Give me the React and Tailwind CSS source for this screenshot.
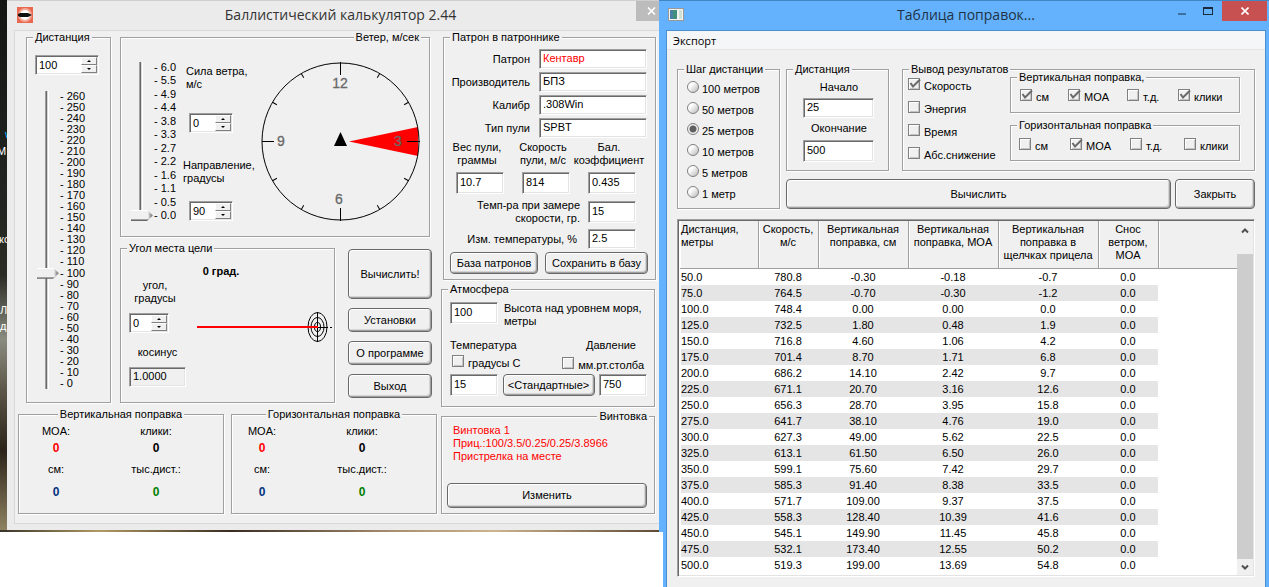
import React from 'react';
import { clsx } from 'clsx';

const distanceMarks = Array.from({ length: 27 }, (_, i) => 260 - i * 10);
const windMarks = ['6.0', '5.5', '4.9', '4.4', '3.8', '3.3', '2.7', '2.2', '1.6', '1.1', '0.5', '0.0'];

const rows = [
  ['50.0', '780.8', '-0.30', '-0.18', '-0.7', '0.0'],
  ['75.0', '764.5', '-0.70', '-0.30', '-1.2', '0.0'],
  ['100.0', '748.4', '0.00', '0.00', '0.0', '0.0'],
  ['125.0', '732.5', '1.80', '0.48', '1.9', '0.0'],
  ['150.0', '716.8', '4.60', '1.06', '4.2', '0.0'],
  ['175.0', '701.4', '8.70', '1.71', '6.8', '0.0'],
  ['200.0', '686.2', '14.10', '2.42', '9.7', '0.0'],
  ['225.0', '671.1', '20.70', '3.16', '12.6', '0.0'],
  ['250.0', '656.3', '28.70', '3.95', '15.8', '0.0'],
  ['275.0', '641.7', '38.10', '4.76', '19.0', '0.0'],
  ['300.0', '627.3', '49.00', '5.62', '22.5', '0.0'],
  ['325.0', '613.1', '61.50', '6.50', '26.0', '0.0'],
  ['350.0', '599.1', '75.60', '7.42', '29.7', '0.0'],
  ['375.0', '585.3', '91.40', '8.38', '33.5', '0.0'],
  ['400.0', '571.7', '109.00', '9.37', '37.5', '0.0'],
  ['425.0', '558.3', '128.40', '10.39', '41.6', '0.0'],
  ['450.0', '545.1', '149.90', '11.45', '45.8', '0.0'],
  ['475.0', '532.1', '173.40', '12.55', '50.2', '0.0'],
  ['500.0', '519.3', '199.00', '13.69', '54.8', '0.0'],
];

const sunken =
  'border border-t-[#a0a0a0] border-l-[#a0a0a0] border-r-white border-b-white shadow-[inset_1px_1px_0_#696969,inset_-1px_-1px_0_#e3e3e3]';

const Group = ({ title, className, legendClass = 'ml-[6px]', children }) => (
  <fieldset
    className={clsx(
      'min-w-0 border border-[#a0a0a0] shadow-[1px_1px_0_#fff,inset_1px_1px_0_#fff]',
      className
    )}
  >
    <legend className={clsx('bg-[#f0f0f0] px-[2px] whitespace-nowrap', legendClass)}>{title}</legend>
    {children}
  </fieldset>
);

const Field = ({ className = 'h-[22px] w-[48px]', ...props }) => (
  <input
    type="text"
    className={clsx('block shrink-0 bg-white px-[3px] pb-[2px] outline-none read-only:bg-[#f0f0f0]', sunken, className)}
    {...props}
  />
);

const Button = ({ className, children }) => (
  <button
    type="button"
    className={clsx(
      'rounded-[4px] border border-[#696969] bg-[#f0f0f0] whitespace-nowrap shadow-[inset_1px_1px_0_#fff,inset_-1px_-1px_0_#a0a0a0,inset_-2px_-2px_0_#d4d4d4]',
      className
    )}
  >
    {children}
  </button>
);

const Spin = ({ className, ...props }) => (
  <div className={clsx('flex h-[20px] bg-white p-px', sunken, className)}>
    <input type="text" className="min-w-0 flex-1 pl-[2px] outline-none" {...props} />
    <div className="flex w-[16px] flex-col">
      {['M1 3 L3 1 L5 3 Z', 'M1 1 L3 3 L5 1 Z'].map((d, i) => (
        <button
          key={d}
          type="button"
          aria-label={i === 0 ? 'Больше' : 'Меньше'}
          className="flex flex-1 items-center justify-center border border-t-white border-r-[#808080] border-b-[#808080] border-l-white bg-[#f0f0f0]"
        >
          <svg width="6" height="4" viewBox="0 0 6 4">
            <path d={d} fill="#000" />
          </svg>
        </button>
      ))}
    </div>
  </div>
);

const Slider = ({ className, ...props }) => (
  <input
    type="range"
    className={clsx(
      'block w-[22px] shrink-0 appearance-none bg-transparent bg-[linear-gradient(to_right,#a0a0a0_0_1px,#696969_1px_2px,#d8d8d8_2px_3px,#fff_3px)] bg-[length:4px_100%] bg-[position:8px_0] bg-no-repeat [direction:rtl] [writing-mode:vertical-lr]',
      '[&::-webkit-slider-thumb]:h-[11px] [&::-webkit-slider-thumb]:w-[22px] [&::-webkit-slider-thumb]:appearance-none [&::-webkit-slider-thumb]:bg-[linear-gradient(to_right,transparent_17px,#8c8c8c_20px),linear-gradient(#fff_0_1px,#f0f0f0_1px_9px,#a0a0a0_9px_10px,#696969_10px)] [&::-webkit-slider-thumb]:[clip-path:polygon(0_0,16px_0,22px_50%,16px_100%,0_100%)]',
      className
    )}
    {...props}
  />
);

const Check = ({ label, checked, className }) => (
  <label className={clsx('flex gap-[4px] whitespace-nowrap', className)}>
    <span className="relative block size-[12px] shrink-0">
      <input
        type="checkbox"
        defaultChecked={checked}
        className="peer block size-[12px] appearance-none border border-[#808080] bg-[#f0f0f0] shadow-[inset_1px_1px_0_#fff,inset_-1px_-1px_0_#c4c4c4]"
      />
      <svg
        className="pointer-events-none absolute top-0 left-0 hidden overflow-visible peer-checked:block"
        width="13"
        height="12"
        viewBox="0 0 13 12"
      >
        <path d="M2.5 5 L5 8.5 L12 1.5" fill="none" stroke="#696969" strokeWidth="2" />
      </svg>
    </span>
    <span className="pt-[2px]">{label}</span>
  </label>
);

const Radio = ({ label, checked }) => (
  <label className="flex gap-[3px]">
    <input
      type="radio"
      name="step"
      defaultChecked={checked}
      className="block size-[12px] appearance-none rounded-full border border-[#808080] bg-[linear-gradient(135deg,#fff_30%,#b8b8b8)] checked:bg-[radial-gradient(circle,#606060_0_3px,#f0f0f0_4px)]"
    />
    <span className="pt-[2px]">{label}</span>
  </label>
);

const Compass = () => (
  <svg width="161" height="159" viewBox="0 1 161 159" className="shrink-0">
    <path d="M88 80.5 L157 66 V95 Z" fill="#f00" />
    <circle cx="79.5" cy="80.5" r="78.5" fill="none" stroke="#000" />
    <g stroke="#000">
      <path d="M79.5 1 V14 M79.5 147 V160 M1 80.5 H13 M146 80.5 H159" />
      {[30, 60, 120, 150, 210, 240, 300, 330].map((a) => (
        <path key={a} d="M79.5 2 V7" transform={`rotate(${a} 79.5 80.5)`} />
      ))}
    </g>
    <path d="M79.5 71 L86 85 H73 Z" fill="#000" />
    <g fill="#696969" textAnchor="middle" className="text-[14px]" stroke="#696969" strokeWidth="0.3">
      <text x="79" y="27">12</text>
      <text x="137" y="85">3</text>
      <text x="78" y="143">6</text>
      <text x="20" y="85">9</text>
    </g>
  </svg>
);

const Target = () => (
  <svg width="136" height="32" viewBox="0 0 136 32">
    <g fill="none" stroke="#000">
      <ellipse cx="120.5" cy="16" rx="9.5" ry="14.5" />
      <ellipse cx="120.5" cy="16" rx="6.5" ry="9.5" />
      <ellipse cx="120.5" cy="16" rx="3" ry="4.5" />
      <path d="M120.5 1 V31 M111 16.5 H131 M133 16.5 H135" />
    </g>
    <path d="M0 16 H121" stroke="#f00" strokeWidth="2" />
  </svg>
);

const Results = ({ title, className, legendClass }) => (
  <Group title={title} legendClass={legendClass} className="h-[106px]">
    <div className={clsx('grid grid-cols-[74px_74px] gap-x-[26px] pt-[4px] text-center', className)}>
      <span>MOA:</span>
      <span>клики:</span>
      <b className="pt-[2px] text-[12px] leading-[16px] text-[#f00]">0</b>
      <b className="pt-[2px] text-[12px] leading-[16px]">0</b>
      <span className="pt-[7px]">см:</span>
      <span className="pt-[7px]">тыс.дист.:</span>
      <b className="pt-[8px] text-[12px] leading-[16px] text-[#003280]">0</b>
      <b className="pt-[8px] text-[12px] leading-[16px] text-[#008000]">0</b>
    </div>
  </Group>
);

const Calculator = () => (
  <div className="flex flex-1 flex-col border-t border-[#cfcfcf] bg-[#ebebeb] pb-[6px]">
    <div className="flex h-[29px] items-start">
      <svg width="16" height="16" viewBox="0 0 16 16" className="mt-[6px] ml-[10px]">
        <rect width="16" height="16" fill="#e8694f" />
        <circle cx="8" cy="8" r="7" fill="#f4a896" />
        <circle cx="8" cy="8" r="5" fill="#fff" />
        <path d="M1 7 L3 6 H11 L15 8 L11 10 H3 L1 9 Z" fill="#111" />
      </svg>
      <h1 className="flex-1 pt-[4px] pl-[12px] text-center font-['Open_Sans','Noto_Sans',sans-serif] text-[14px] leading-[20px] text-[#333]">
        Баллистический калькулятор 2.44
      </h1>
      <button type="button" aria-label="Закрыть" className="flex h-[20px] w-[23px] items-center justify-end bg-[#bcbcbc] pr-[3px]">
        <svg width="9" height="8" viewBox="0 0 9 8">
          <path d="M1 0.5 L8 7.5 M8 0.5 L1 7.5" stroke="#fff" strokeWidth="1.6" />
        </svg>
      </button>
    </div>

    <div className="ml-[7px] flex gap-[4px] border-t border-b border-l border-[#d9d9d9] bg-[#f0f0f0] pb-[9px] pl-[3px]">
      <div className="flex flex-col gap-[5px]">
        <div className="flex gap-[9px] pl-[8px]">
          <Group title="Дистанция" className="w-[85px]">
            <div className="flex flex-col gap-[16px] pt-[11px] pl-[8px]">
              <Spin className="w-[64px]" defaultValue="100" aria-label="Дистанция" />
              <div className="flex gap-px pl-[2px]">
                <Slider className="h-[298px]" min="0" max="260" defaultValue="100" aria-label="Дистанция" />
                <div className="flex flex-col justify-between leading-[11px] whitespace-pre">
                  {distanceMarks.map((m) => (
                    <span key={m}>- {m}</span>
                  ))}
                </div>
              </div>
            </div>
          </Group>

          <div className="flex flex-col gap-[5px]">
            <Group title="Ветер, м/сек" legendClass="mr-[8px] ml-auto" className="h-[206px] w-[310px]">
              <div className="flex pt-[18px] pl-[10px]">
                <Slider className="h-[159px]" min="0" max="6" defaultValue="0" aria-label="Сила ветра" />
                <div className="flex w-[30px] flex-col justify-between pl-px leading-[11px]">
                  {windMarks.map((m) => (
                    <span key={m}>- {m}</span>
                  ))}
                </div>
                <div className="flex w-[78px] flex-col gap-[26px] pt-[3px]">
                  <div>
                    <label htmlFor="wind" className="block pl-[3px]">
                      Сила ветра,
                      <br />
                      м/с
                    </label>
                    <Spin id="wind" className="mt-[22px] ml-[6px] w-[44px]" defaultValue="0" />
                  </div>
                  <div>
                    <label htmlFor="direction" className="block">
                      Направление, градусы
                    </label>
                    <Spin id="direction" className="mt-[16px] ml-[6px] w-[44px]" defaultValue="90" />
                  </div>
                </div>
                <Compass />
              </div>
            </Group>

            <div className="flex items-start gap-[13px]">
              <Group title="Угол места цели" className="h-[161px] w-[215px]">
                <div className="flex pt-[10px] pl-[8px]">
                  <div className="flex w-[68px] flex-col pt-[14px]">
                    <label htmlFor="angle" className="w-[52px] text-center">
                      угол,
                      <br />
                      градусы
                    </label>
                    <Spin id="angle" className="mt-[8px] w-[40px]" defaultValue="0" />
                    <label htmlFor="cosine" className="mt-[13px] w-[57px] text-center">
                      косинус
                    </label>
                    <Field id="cosine" className="mt-[8px] h-[20px] w-[57px]" defaultValue="1.0000" readOnly />
                  </div>
                  <div className="flex flex-col gap-[33px]">
                    <b className="w-[48px] text-center whitespace-nowrap">0 град.</b>
                    <Target />
                  </div>
                </div>
              </Group>
              <div className="flex w-[84px] flex-col gap-[9px] pt-[7px]">
                <Button className="h-[50px]">Вычислить!</Button>
                <Button className="h-[24px]">Установки</Button>
                <Button className="h-[24px]">О программе</Button>
                <Button className="h-[24px]">Выход</Button>
              </div>
            </div>
          </div>
        </div>

        <div className="grid grid-cols-[206px_206px] gap-[7px]">
          <Results title="Вертикальная поправка" legendClass="mx-auto" />
          <Results title="Горизонтальная поправка" legendClass="mx-auto" className="-ml-[7px]" />
        </div>
      </div>

      <div className="flex w-[215px] flex-col gap-[3px]">
        <Group title="Патрон в патроннике" className="ml-[2px] h-[249px]">
          <div className="flex flex-col gap-[3px] pt-[5px] pr-[8px]">
            {[
              ['Патрон', 'Кентавр', 'text-[#f00]'],
              ['Производитель', 'БПЗ'],
              ['Калибр', '.308Win'],
              ['Тип пули', 'SPBT'],
            ].map(([label, value, color]) => (
              <label key={label} className="flex items-center justify-end gap-[9px]">
                {label}
                <Field className={clsx('h-[20px] w-[108px]', color)} defaultValue={value} />
              </label>
            ))}
          </div>
          <div className="flex pt-[3px] pl-[3px] text-center whitespace-nowrap">
            {[
              ['Вес пули,', 'граммы', '10.7'],
              ['Скорость', 'пули, м/с', '814'],
              ['Бал.', 'коэффициент', '0.435'],
            ].map(([a, b, value]) => (
              <label key={a} className="flex w-[66px] flex-col items-center gap-[5px]">
                <span className="pr-[6px]">
                  {a}
                  <br />
                  {b}
                </span>
                <Field defaultValue={value} />
              </label>
            ))}
          </div>
          <div className="flex flex-col gap-[4px] pt-[5px] pr-[19px] text-right">
            <label className="flex items-center justify-end gap-[8px]">
              <span>
                Темп-ра при замере
                <br />
                скорости, гр.
              </span>
              <Field defaultValue="15" />
            </label>
            <label className="flex items-center justify-end gap-[11px]">
              Изм. температуры, %
              <Field className="h-[20px] w-[48px]" defaultValue="2.5" />
            </label>
          </div>
          <div className="flex gap-[7px] pt-[3px] pl-[6px]">
            <Button className="h-[22px] w-[88px]">База патронов</Button>
            <Button className="h-[22px] w-[103px]">Сохранить в базу</Button>
          </div>
        </Group>

        <Group title="Атмосфера" className="mr-px h-[124px]">
          <div className="pr-[7px] pl-[8px]">
            <label className="flex gap-[6px] pt-[6px]">
              <Field defaultValue="100" />
              <span>
                Высота над уровнем моря,
                <br />
                метры
              </span>
            </label>
            <div className="flex justify-between pt-[11px] pr-[11px]">
              <span>Температура</span>
              <span>Давление</span>
            </div>
            <div className="flex justify-between pt-[3px] pr-[3px] pl-[2px]">
              <Check label="градусы C" />
              <Check label="мм.рт.столба" className="pt-[2px]" />
            </div>
            <div className="flex justify-between pt-[2px]">
              <Field defaultValue="15" aria-label="Температура" />
              <Button className="h-[22px] w-[92px]">&lt;Стандартные&gt;</Button>
              <Field defaultValue="750" aria-label="Давление" />
            </div>
          </div>
        </Group>

        <Group title="Винтовка" legendClass="mr-[5px] ml-auto" className="mr-px h-[104px]">
          <p className="pt-px pl-[11px] text-[#f00]">
            Винтовка 1
            <br />
            Приц.:100/3.5/0.25/0.25/3.8966
            <br />
            Пристрелка на месте
          </p>
          <div className="flex pt-[20px] pr-[7px] pl-[5px]">
            <Button className="h-[25px] flex-1">Изменить</Button>
          </div>
        </Group>
      </div>
    </div>
  </div>
);

const Desktop = () => (
  <div className="relative w-[7px] shrink-0 overflow-hidden bg-[linear-gradient(#141613,#232620_40%,#2c2c26_52%,#8a8c80_64%,#5a5546_74%,#2c241a_85%,#8f8261)] text-white">
    <span className="absolute top-[128px] left-[5px] text-sky-400">w</span>
    <span className="absolute top-[145px] -left-[3px]">М</span>
    <span className="absolute top-[233px] -left-[1px]">ко</span>
    <span className="absolute top-[304px] left-0">Л</span>
    <span className="absolute top-[320px] left-0">ди</span>
  </div>
);

const headers = [
  ['Дистанция, метры', 'w-[78px] text-left'],
  ['Скорость, м/с', 'w-[60px]'],
  ['Вертикальная поправка, см', 'w-[90px]'],
  ['Вертикальная поправка, MOA', 'w-[90px]'],
  ['Вертикальная поправка в щелчках прицела', 'w-[100px]'],
  ['Снос ветром, MOA', 'w-[60px]'],
];

const Corrections = () => (
  <div className="flex min-w-0 flex-1 flex-col border-t border-[#4286c4] bg-[#64b2fd]">
    <div className="flex h-[29px] items-start pr-[2px]">
      <svg width="16" height="14" viewBox="0 0 16 14" className="mt-[7px] ml-[9px]">
        <rect x="0.5" y="0.5" width="15" height="12" fill="#f4f4f4" stroke="#999" />
        <rect x="2" y="2" width="7" height="9" fill="#3f8f7a" />
        <rect x="2" y="2" width="3" height="9" fill="#4a7fa8" />
        <rect x="11" y="2" width="3" height="9" fill="#cfe0d4" />
      </svg>
      <h2 className="flex-1 pt-[4px] pl-[78px] text-center font-['Open_Sans','Noto_Sans',sans-serif] text-[14px] leading-[20px] text-[#1f3347]">
        Таблица поправок...
      </h2>
      <button type="button" aria-label="Свернуть" className="flex h-[20px] w-[24px] justify-center pt-[12px]">
        <span className="h-[2px] w-[8px] bg-[#3d6f9f]" />
      </button>
      <button type="button" aria-label="Развернуть" className="flex h-[20px] w-[28px] justify-center pt-[6px]">
        <span className="h-[8px] w-[10px] border border-t-2 border-[#1b2a38]" />
      </button>
      <button type="button" aria-label="Закрыть окно" className="flex h-[20px] w-[45px] items-center justify-center bg-[#c75050]">
        <svg width="8" height="8" viewBox="0 0 8 8">
          <path d="M0.5 0.5 L7.5 7.5 M7.5 0.5 L0.5 7.5" stroke="#fff" strokeWidth="1.6" />
        </svg>
      </button>
    </div>

    <div className="mr-[3px] ml-[7px] flex flex-1 flex-col border-t border-r border-l border-[#4a90d0] bg-[#f0f0f0]">
      <div className="h-[19px] border-b border-[#e4e4e4] bg-[#f5f6f7] pl-[6px]">
        <button type="button" className="block font-['Open_Sans','Noto_Sans',sans-serif] text-[11px] leading-[19px]">
          Экспорт
        </button>
      </div>

      <div className="flex flex-col gap-[10px] px-[10px] pt-[13px]">
        <div className="flex gap-[6px]">
          <Group title="Шаг дистанции" className="w-[103px] shrink-0">
            <div className="flex flex-col gap-[6px] pt-[5px] pb-[5px] pl-[9px]">
              {['100 метров', '50 метров', '25 метров', '10 метров', '5 метров', '1 метр'].map((label, i) => (
                <Radio key={label} label={label} checked={i === 2} />
              ))}
            </div>
          </Group>

          <div className="flex min-w-0 flex-1 flex-col gap-[8px]">
            <div className="flex gap-[13px]">
              <Group title="Дистанция" className="h-[108px] w-[103px] shrink-0">
                <div className="flex flex-col pt-[5px] pl-[16px] text-center">
                  <label className="flex w-[72px] flex-col gap-[4px]">
                    Начало
                    <Field className="h-[20px] w-[71px]" defaultValue="25" />
                  </label>
                  <label className="flex w-[72px] flex-col gap-[5px] pt-[4px]">
                    Окончание
                    <Field className="h-[22px] w-[71px]" defaultValue="500" />
                  </label>
                </div>
              </Group>

              <Group title="Вывод результатов" className="h-[108px] min-w-0 flex-1">
                <div className="flex pl-[5px]">
                  <div className="flex w-[102px] flex-col gap-[8px] pt-[2px]">
                    <Check label="Скорость" checked />
                    <Check label="Энергия" />
                    <Check label="Время" />
                    <Check label="Абс.снижение" />
                  </div>
                  <div className="-mt-[5px] flex min-w-0 flex-1 flex-col gap-[6px] pr-[14px]">
                    <Group title="Вертикальная поправка," className="h-[42px]">
                      <div className="flex pt-[5px] pl-[9px]">
                        <Check label="см" checked className="w-[48px]" />
                        <Check label="MOA" checked className="w-[59px]" />
                        <Check label="т.д." className="w-[51px]" />
                        <Check label="клики" checked />
                      </div>
                    </Group>
                    <Group title="Горизонтальная поправка" className="h-[42px]">
                      <div className="flex pt-[6px] pl-[8px]">
                        <Check label="см" className="w-[51px]" />
                        <Check label="MOA" checked className="w-[60px]" />
                        <Check label="т.д." className="w-[54px]" />
                        <Check label="клики" />
                      </div>
                    </Group>
                  </div>
                </div>
              </Group>
            </div>
            <div className="flex gap-[4px]">
              <Button className="h-[30px] flex-1">Вычислить</Button>
              <Button className="h-[30px] w-[80px]">Закрыть</Button>
            </div>
          </div>
        </div>

        <div className={clsx('flex h-[358px] bg-white p-px', sunken)}>
          <table className="w-full table-fixed border-collapse self-start">
            <thead>
              <tr className="h-[47px] bg-[#f0f0f0]">
                {headers.map(([text, cls]) => (
                  <th
                    key={text}
                    className={clsx(
                      'border-r border-b border-[#a0a0a0] px-px pt-[2px] align-top font-normal shadow-[inset_1px_0_0_#fff]',
                      cls
                    )}
                  >
                    {text}
                  </th>
                ))}
                <td className="border-b border-[#a0a0a0] shadow-[inset_1px_0_0_#fff]" />
              </tr>
            </thead>
            <tbody>
              <tr className="h-px" />
              {rows.map((row, i) => (
                <tr key={row[0]} className="h-[16px]">
                  {row.map((cell, j) => (
                    <td
                      key={j}
                      className={clsx(
                        j === 0 ? 'border-l-2 border-white' : 'text-center',
                        i % 2 === 1 && 'bg-[#e5e5e5]'
                      )}
                    >
                      {cell}
                    </td>
                  ))}
                  <td />
                </tr>
              ))}
            </tbody>
          </table>
          <div className="flex w-[16px] shrink-0 flex-col items-center bg-[#f0f0f0]">
            <svg width="8" height="33" viewBox="0 0 8 33">
              <path d="M1 11.5 L4 8.5 L7 11.5" fill="none" stroke="#505050" strokeWidth="2" />
            </svg>
            <div className="w-full flex-1 bg-[#cdcdcd]" />
            <svg width="8" height="16" viewBox="0 0 8 16">
              <path d="M1 6.5 L4 9.5 L7 6.5" fill="none" stroke="#505050" strokeWidth="2" />
            </svg>
          </div>
        </div>
      </div>
    </div>
  </div>
);

export default function App() {
  return (
    <div className="flex min-h-screen bg-white font-['Liberation_Sans',Arial,sans-serif] text-[11px] leading-[13px] text-black">
      <div className="flex w-[659px] shrink-0 flex-col">
        <div className="flex">
          <Desktop />
          <Calculator />
        </div>
        <div className="h-[2px] bg-[linear-gradient(to_right,#3a3428,#b09a62_15%,#3a2c20_35%,#a98f70_60%,#cbb48e_75%,#5f4a34)]" />
        <div className="relative z-10 -mr-[4px] flex-1 bg-white" />
      </div>
      <Corrections />
    </div>
  );
}
